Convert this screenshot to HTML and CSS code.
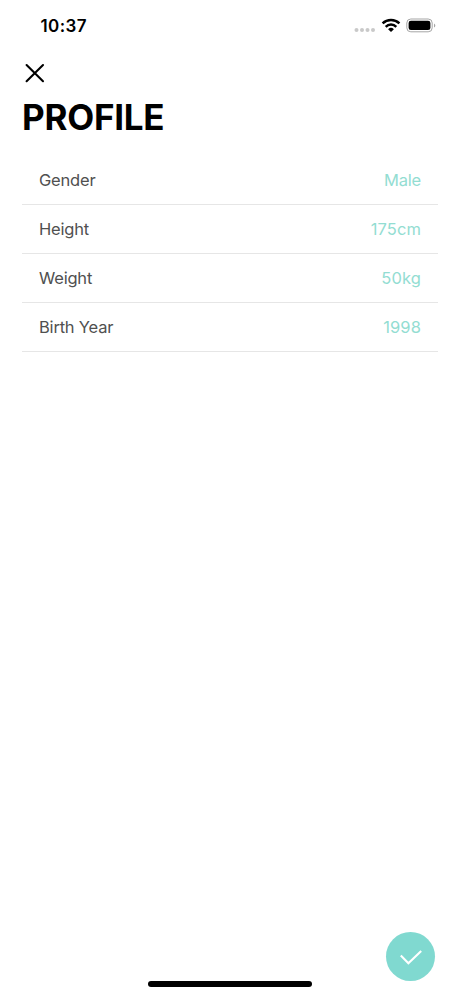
FILE: index.html
```html
<!DOCTYPE html>
<html lang="en">
<head>
    <meta charset="UTF-8">
    <meta name="viewport" content="width=device-width, initial-scale=1.0">
    <title>Profile</title>
    <link rel="stylesheet" href="styles.css">
</head>
<body>
    <div class="screen">
        <div class="status-bar">
            <span class="time">10:37</span>
            <svg width="84" height="20" viewBox="0 0 84 20">
                <g fill="#c9c9c9">
                    <circle cx="4.5" cy="15" r="2"/>
                    <circle cx="10" cy="15" r="2"/>
                    <circle cx="15.5" cy="15" r="2"/>
                    <circle cx="21" cy="15" r="2"/>
                </g>
                <g fill="none" stroke="#000" stroke-width="2.5">
                    <path d="M30.6 8.3a12.2 12.2 0 0 1 16.8 0"/>
                    <path d="M33.7 11.8a7.5 7.5 0 0 1 10.6 0"/>
                </g>
                <path d="M36.1 14.2a4.2 4.2 0 0 1 5.8 0L39 17z" fill="#000"/>
                <rect x="54.8" y="4" width="25.4" height="12.8" rx="4" fill="none" stroke="#a5a5a5"/>
                <rect x="56.6" y="5.8" width="21.8" height="9.2" rx="2.3" fill="#000"/>
                <path d="M82 8.4v4.2c1.8-.8 1.8-3.4 0-4.2z" fill="#a5a5a5"/>
            </svg>
        </div>
        <button class="close" aria-label="Close">
            <svg width="20" height="20" viewBox="0 0 20 20">
                <path d="M1.6 2l16.4 16.2M18 2L1.6 18.2" stroke="#000" stroke-width="2.1" stroke-linecap="round"/>
            </svg>
        </button>
        <h1 class="title">PROFILE</h1>
        <div class="list">
            <div class="row">
                <span class="label">Gender</span>
                <span class="value">Male</span>
            </div>
            <div class="row">
                <span class="label">Height</span>
                <span class="value number">175cm</span>
            </div>
            <div class="row">
                <span class="label">Weight</span>
                <span class="value number">50kg</span>
            </div>
            <div class="row">
                <span class="label">Birth Year</span>
                <span class="value number">1998</span>
            </div>
        </div>
        <div class="footer">
            <button class="confirm" aria-label="Save">
                <svg width="24" height="18" viewBox="0 0 24 18">
                    <path d="M1.8 7.4l7.6 7.8L22.2 3" fill="none" stroke="#fff" stroke-width="2.1"/>
                </svg>
            </button>
            <div class="home-bar"></div>
        </div>
    </div>
</body>
</html>
```

FILE: styles.css
```css
body {
    margin: 0;
    background: #fff;
    font-family: Inter, "Liberation Sans", sans-serif;
}
button {
    border: none;
    padding: 0;
    cursor: pointer;
}
svg {
    display: block;
}
.screen {
    display: flex;
    flex-direction: column;
    height: 996px;
    box-sizing: border-box;
}
.status-bar {
    display: flex;
    justify-content: space-between;
    align-items: center;
    height: 20px;
    padding: 15px 24px 0 40.5px;
}
.time {
    padding-top: 1px;
    font-size: 17px;
    font-weight: 600;
    line-height: 20px;
    letter-spacing: 0.4px;
}
.close {
    width: 20px;
    height: 20px;
    margin: 28px 0 0 25px;
    background: none;
}
.title {
    margin: 12px 0 0 22px;
    font-size: 35px;
    font-weight: 700;
    line-height: 44px;
    letter-spacing: -0.25px;
}
.list {
    margin: 17px 22px 0;
}
.row {
    display: flex;
    justify-content: space-between;
    align-items: center;
    height: 48px;
    padding: 0 17px;
    border-bottom: 1px solid #e6e6e6;
    font-size: 16.5px;
    letter-spacing: -0.2px;
}
.label {
    color: #505050;
}
.value {
    color: #93ddd2;
}
.number {
    letter-spacing: 0.1px;
}
.footer {
    display: flex;
    flex-direction: column;
    margin-top: auto;
    padding-bottom: 9px;
}
.confirm {
    display: flex;
    align-items: center;
    justify-content: center;
    align-self: flex-end;
    width: 49px;
    height: 49px;
    margin-right: 25px;
    border-radius: 50%;
    background: #80d9d0;
}
.home-bar {
    align-self: center;
    width: 164px;
    height: 6px;
    border-radius: 3px;
    background: #000;
}
```
